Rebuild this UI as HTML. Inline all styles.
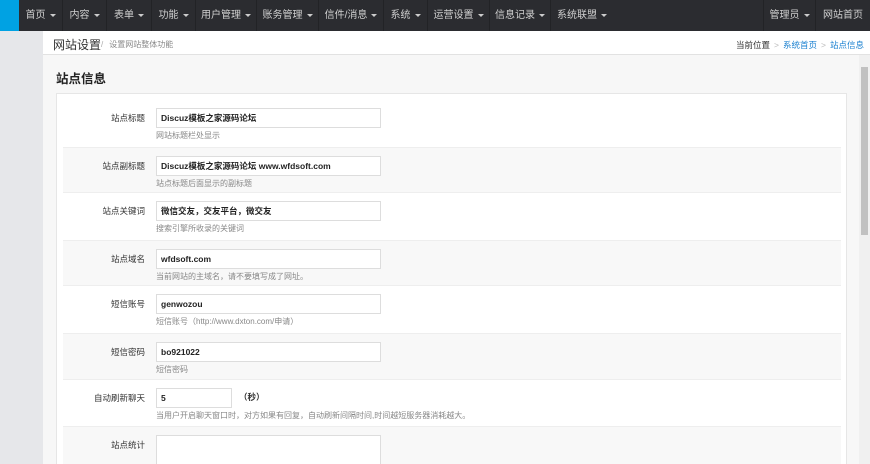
<!DOCTYPE html>
<html style="width:870px;height:464px;overflow:hidden"><head><meta charset="utf-8"><style>
*{margin:0;padding:0;box-sizing:border-box}
body{width:870px;height:464px;overflow:hidden;font-family:"Liberation Sans","Noto Sans CJK SC",sans-serif;background:#f7f7f7;position:relative;color:#333}
.nav{position:absolute;left:0;top:0;width:870px;height:31px;background:#2b2c30}
.blue{position:absolute;left:0;top:0;width:19px;height:31px;background:#00a2e3}
.ni{position:absolute;top:0;height:31px;line-height:31px;font-size:10px;color:#d0d0d0;text-align:center;border-right:1px solid #222326}
.ni .c{display:inline-block;width:0;height:0;border-left:3px solid transparent;border-right:3px solid transparent;border-top:3px solid #ccc;vertical-align:middle;margin-left:4px}
.side{position:absolute;left:0;top:31px;width:43px;height:433px;background:#e6e7ea}
.bc{position:absolute;left:43px;top:31px;width:827px;height:24px;background:#fff;border-bottom:1px solid #e2e2e2}
.bc .t{position:absolute;left:10px;top:5px;font-size:12px;color:#333}
.bc .s{position:absolute;left:58px;top:8px;font-size:8px;color:#888;white-space:nowrap}
.bc .r{position:absolute;right:6px;top:8px;font-size:8.5px;color:#333}
.bc .r b{font-weight:normal;color:#1a80d0}
.bc .r i{font-style:normal;color:#bbb;margin:0 4px}
h2{position:absolute;left:56px;top:68px;font-size:12.5px;font-weight:bold;color:#222}
.panel{position:absolute;left:56px;top:93px;width:791px;height:371px;background:#fff;border:1px solid #e6e6e6;border-bottom:none;overflow:hidden}
.row{position:absolute;left:6px;width:778px;height:46.6px}
.row.g{background:#f8f8f8;border-top:1px solid #eee;border-bottom:1px solid #eee}
.lab{position:absolute;right:696px;top:12px;font-size:8.5px;color:#333;white-space:nowrap}
.in{position:absolute;left:93px;top:8px;width:225px;height:20px;border:1px solid #ddd;background:#fff;font-size:8.5px;font-weight:bold;line-height:18px;padding-left:4px;color:#222}
.hp{position:absolute;left:93px;top:30px;font-size:8px;color:#888;white-space:nowrap}
.sb{position:absolute;left:859px;top:55px;width:11px;height:409px;background:#f0f0f0}
.th{position:absolute;left:861px;top:67px;width:7px;height:168px;background:#c1c1c1}
</style></head><body>
<div class="nav"><div class="blue"></div>
<div class="ni" style="left:19px;width:44px">首页<span class="c"></span></div>
<div class="ni" style="left:63px;width:44px">内容<span class="c"></span></div>
<div class="ni" style="left:107px;width:45px">表单<span class="c"></span></div>
<div class="ni" style="left:152px;width:44px">功能<span class="c"></span></div>
<div class="ni" style="left:196px;width:61px">用户管理<span class="c"></span></div>
<div class="ni" style="left:257px;width:62px">账务管理<span class="c"></span></div>
<div class="ni" style="left:319px;width:65px">信件/消息<span class="c"></span></div>
<div class="ni" style="left:384px;width:44px">系统<span class="c"></span></div>
<div class="ni" style="left:428px;width:62px">运营设置<span class="c"></span></div>
<div class="ni" style="left:490px;width:61px">信息记录<span class="c"></span></div>
<div class="ni" style="left:551px;width:62px;border-right:none">系统联盟<span class="c"></span></div>
<div class="ni" style="left:763px;width:53px;border-left:1px solid #222326">管理员<span class="c"></span></div>
<div class="ni" style="left:816px;width:54px;border-right:none">网站首页</div>
</div>
<div class="side"></div>
<div class="bc"><span class="t">网站设置</span><span class="s"><span style="color:#aaa;margin-right:6px">/</span>设置网站整体功能</span>
<span class="r">当前位置<i>&gt;</i><b>系统首页</b><i>&gt;</i><b>站点信息</b></span></div>
<h2>站点信息</h2>
<div class="panel">
<div class="row" style="top:6px"><span class="lab">站点标题</span><div class="in">Discuz模板之家源码论坛</div><span class="hp">网站标题栏处显示</span></div>
<div class="row g" style="top:52.6px"><span class="lab">站点副标题</span><div class="in">Discuz模板之家源码论坛 www.wfdsoft.com</div><span class="hp">站点标题后面显示的副标题</span></div>
<div class="row" style="top:99.2px"><span class="lab">站点关键词</span><div class="in">微信交友，交友平台，微交友</div><span class="hp">搜索引擎所收录的关键词</span></div>
<div class="row g" style="top:145.8px"><span class="lab">站点域名</span><div class="in">wfdsoft.com</div><span class="hp">当前网站的主域名，请不要填写成了网址。</span></div>
<div class="row" style="top:192.4px"><span class="lab">短信账号</span><div class="in">genwozou</div><span class="hp">短信账号（http://www.dxton.com/申请）</span></div>
<div class="row g" style="top:239px"><span class="lab">短信密码</span><div class="in">bo921022</div><span class="hp">短信密码</span></div>
<div class="row" style="top:285.6px"><span class="lab">自动刷新聊天</span><div class="in" style="width:76px">5</div><span style="position:absolute;left:176px;top:11px;font-size:8.5px;font-weight:bold">（秒）</span><span class="hp">当用户开启聊天窗口时，对方如果有回复，自动刷新间隔时间,时间越短服务器消耗越大。</span></div>
<div class="row g" style="top:332.2px;height:60px"><span class="lab">站点统计</span><div class="in" style="height:40px"></div></div>
</div>
<div class="sb"></div><div class="th"></div>
</body></html>
